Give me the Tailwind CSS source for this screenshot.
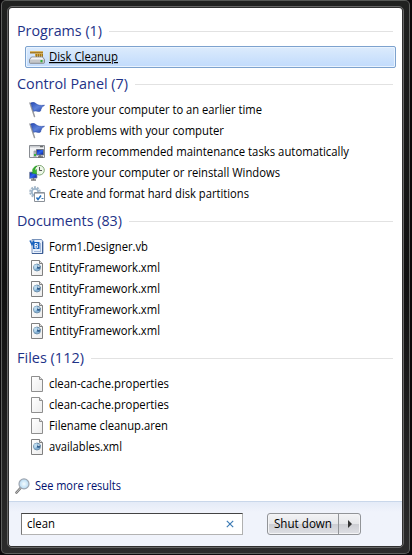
<!DOCTYPE html>
<html lang="en">
<head>
<meta charset="utf-8">
<title>Start menu search</title>
<script src="https://cdn.jsdelivr.net/npm/@tailwindcss/browser@4"></script>
</head>
<body class="w-[412px] h-[555px] overflow-hidden bg-[#0b090b] font-['Open_Sans','Noto_Sans',sans-serif] text-[12px] text-black">
<svg class="absolute size-0">
  <defs>
    <linearGradient id="flagFill" x2="1" y2="1"><stop stop-color="#2548b4"/><stop offset=".5" stop-color="#5f83da"/><stop offset="1" stop-color="#2444ad"/></linearGradient>
    <linearGradient id="paper" x2="1" y2="1"><stop stop-color="#fff"/><stop offset="1" stop-color="#ececec"/></linearGradient>
    <linearGradient id="screen" x2="1" y2="1"><stop stop-color="#0919a5"/><stop offset=".5" stop-color="#2d65ef"/><stop offset="1" stop-color="#07188d"/></linearGradient>
    <radialGradient id="lens"><stop stop-color="#f4fcff"/><stop offset="1" stop-color="#b5d9f2"/></radialGradient>
  </defs>
  <symbol id="flag" viewBox="0 0 16 16"><path d="M1 1 5.500 14.500" stroke="#9a9b9f" stroke-width="1.500" stroke-linecap="round"/><path d="M1.800 1C4 -.3 5.500.5 7.500 2S11 3.500 15.500 3.300C13 4.500 12 6.500 11.500 9 9 10.500 7.500 8 4.500 9.300Z" fill="url(#flagFill)" stroke="#2949a8" stroke-width=".6"/></symbol>
  <symbol id="page" viewBox="0 0 16 16"><path d="M2.500.5h8l3 3v12h-11z" fill="url(#paper)" stroke="#8e8e8e"/><path d="M10.500.5v3h3" fill="#ddd" stroke="#8e8e8e"/></symbol>
  <symbol id="xml" viewBox="0 0 16 16"><path d="M2.500.5h8l3 3v12h-11z" fill="url(#paper)" stroke="#808080"/><path d="M10.500.5v3h3" fill="#ddd" stroke="#808080"/><circle cx="8" cy="7.500" r="3.500" fill="#86b2d6" stroke="#66869f" stroke-width=".8"/><path d="M5 5.500 7.500 4l1 3-3 2.500z" fill="#bcdcf0"/><path d="M8 6h3.500L10.500 9 8 8.500z" fill="#315f8d"/><path d="M8.500 6.200h2.200" stroke="#fff"/></symbol>
  <symbol id="vb" viewBox="0 0 16 16"><path d="M3 .5h9.500l1.500 2v12H3z" fill="#e6effb" stroke="#7893bb"/><path d="M13.500 2.500v12M3 14.500h11" stroke="#3e5f96"/><path d="M5 12.500h7M11.500 4v8" stroke="#a3b9db"/><path d="M4 3h6.500v7H4z" fill="#1761bd"/><path d="m1 1.500 2 4 2-4" fill="none" stroke="#1761bd" stroke-width="1.500"/><path d="M6 4.500v4.500h1.500a1.100 1.100 0 0 0 0-2.300H6h1.500a1 1 0 0 0 0-2.200z" fill="none" stroke="#fff"/></symbol>
  <symbol id="disk" viewBox="0 0 16 16"><path d="M1 2.500h13v2H1z" fill="#a77b25"/><path d="M1 2.500h13" stroke="#dab768"/><path d="M6 4.500h8v3H6z" fill="#d5a73e"/><path d="M7.500 5v3M9.500 5v3M11.500 5v3M13.500 5v3" stroke="#8f681c" stroke-width=".8"/><path d="M2.500 8h11l2 2.500v3q0 .8-.8.8H1.300q-.8 0-.8-.8v-3z" fill="#c5c7ca" stroke="#77797c" stroke-width=".8"/><path d="M2.800 8.400h10.400l1.600 2H1.200z" fill="#f5f5f5"/><path d="M11.500 11h2v2.300h-2z" fill="#30ac38"/></symbol>
  <symbol id="maint" viewBox="0 0 16 16"><path d="M.5 1.500h15v12H.5z" fill="#f3f4f6" stroke="#888c92"/><path d="M1 2h14v1.500H1z" fill="#c9ccd0"/><path d="M11 2.700h3" stroke="#555"/><path d="M5 7h2v6.500H5z" fill="#bfc4ca" stroke="#7c8287" stroke-width=".6"/><path d="M5 10h2v2H5z" fill="#35b544"/><path d="M7.500 5.500h7v5.500h-7z" fill="url(#screen)" stroke="#6e7580"/><path d="M9 13h5M11 11v2" stroke="#666" stroke-width="1.300"/></symbol>
  <symbol id="recover" viewBox="0 0 16 16"><path d="m.5 7.200 7.500-.7v6.500l-7.500.5z" fill="url(#screen)" stroke="#8790a0" stroke-width=".7"/><path d="M2 15h5M4.500 13v2" stroke="#777" stroke-width="1.400"/><circle cx="10.500" cy="5.200" r="4.800" fill="#edf7e8" stroke="#83a876"/><path d="M10.500 2v3.500H13" stroke="#555" fill="none"/><path d="M7 1C3.500 3 3 5.500 4.200 7L2.500 8l5 1V4.500L6.200 5.700C5.500 4 6 2.500 8 1z" fill="#37b52e" stroke="#218c20" stroke-width=".5"/></symbol>
  <symbol id="gear" viewBox="0 0 16 16"><circle cx="6" cy="6" r="4.800" fill="none" stroke="#a3b6c7" stroke-width="2" stroke-dasharray="2 1"/><circle cx="6" cy="6" r="3.200" fill="#fff" stroke="#9db5ca" stroke-width="1.800"/><path d="M5.500 6.500h10v9h-10z" fill="#fff" stroke="#8a9199"/><path d="M6 7.500h9" stroke="#b9bec5"/><path d="m7.500 11.500 1.500 2 3-4" fill="none" stroke="#246fbd" stroke-width="1.500"/><path d="M12.500 12.500h2" stroke="#447caf"/></symbol>
  <symbol id="mag" viewBox="0 0 16 16"><path d="M6 9.500 1.500 14.500" stroke="#777" stroke-width="2.600" stroke-linecap="round"/><path d="M6 9.500 1.500 14.500" stroke="#c7c7c7" stroke-width="1" stroke-linecap="round"/><circle cx="9" cy="5.900" r="5" fill="url(#lens)" stroke="#9da5b0" stroke-width="1.200"/></symbol>
</svg>
<div class="ml-px w-[409px] h-[554px] rounded-[5px] border border-[#5d5f5d] border-t-[#555755] bg-linear-to-b from-[#202120] via-[#101010] to-[#2b2b2b] pt-[5px] pl-[5px]">
 <div class="w-[397px] h-[542px] rounded-[5px] border border-[#666] bg-[#303030] p-px">
  <div class="w-[393px] h-[538px] rounded-[3px] bg-white overflow-hidden flex flex-col">
   <main class="h-[493px] pl-2 pt-[13px] shrink-0">
    <h2 class="flex items-center h-5 w-[376px] gap-[7px] text-[15px] text-[#1e3287]"><svg class="w-[85px] h-5 shrink-0 fill-current overflow-visible"><text y="15" textLength="85" lengthAdjust="spacingAndGlyphs">Programs (1)</text></svg><i class="h-px grow bg-[#e2e2e2]"></i></h2>
    <div class="mt-[5px] ml-2 w-[371px] h-[22px] rounded-[2px] border border-[#7da2ce] bg-linear-to-b from-[#dcebfc] to-[#c1dbfc] shadow-[inset_0_0_0_1px_#e9f3fe] flex items-center gap-1 pl-[3px]"><svg class="size-4"><use href="#disk"/></svg><svg class="w-[69px] h-4 overflow-visible"><text class="underline" y="12" textLength="69" lengthAdjust="spacingAndGlyphs">Disk Cleanup</text></svg></div>
    <h2 class="mt-[6px] flex items-center h-5 w-[376px] gap-[7px] text-[15px] text-[#1e3287]"><svg class="w-[111px] h-5 shrink-0 fill-current overflow-visible"><text y="15" textLength="111" lengthAdjust="spacingAndGlyphs">Control Panel (7)</text></svg><i class="h-px grow bg-[#e2e2e2]"></i></h2>
    <ul class="mt-[5px] ml-3">
     <li class="h-[21px] flex items-center gap-1"><svg class="size-4"><use href="#flag"/></svg><svg class="w-[213px] h-4 overflow-visible"><text y="11.8" textLength="213" lengthAdjust="spacingAndGlyphs">Restore your computer to an earlier time</text></svg></li>
     <li class="h-[21px] flex items-center gap-1"><svg class="size-4"><use href="#flag"/></svg><svg class="w-[175px] h-4 overflow-visible"><text y="11.8" textLength="175" lengthAdjust="spacingAndGlyphs">Fix problems with your computer</text></svg></li>
     <li class="h-[21px] flex items-center gap-1"><svg class="size-4"><use href="#maint"/></svg><svg class="w-[300px] h-4 overflow-visible"><text y="11.8" textLength="300" lengthAdjust="spacingAndGlyphs">Perform recommended maintenance tasks automatically</text></svg></li>
     <li class="h-[21px] flex items-center gap-1"><svg class="size-4"><use href="#recover"/></svg><svg class="w-[231px] h-4 overflow-visible"><text y="11.8" textLength="231" lengthAdjust="spacingAndGlyphs">Restore your computer or reinstall Windows</text></svg></li>
     <li class="h-[21px] flex items-center gap-1"><svg class="size-4"><use href="#gear"/></svg><svg class="w-[200px] h-4 overflow-visible"><text y="11.8" textLength="200" lengthAdjust="spacingAndGlyphs">Create and format hard disk partitions</text></svg></li>
    </ul>
    <h2 class="mt-[7px] flex items-center h-5 w-[376px] gap-[7px] text-[15px] text-[#1e3287]"><svg class="w-[105px] h-5 shrink-0 fill-current overflow-visible"><text y="15" textLength="105" lengthAdjust="spacingAndGlyphs">Documents (83)</text></svg><i class="h-px grow bg-[#e2e2e2]"></i></h2>
    <ul class="mt-[5px] ml-3">
     <li class="h-[21px] flex items-center gap-1"><svg class="size-4"><use href="#vb"/></svg><svg class="w-[99px] h-4 overflow-visible"><text y="11.8" textLength="99" lengthAdjust="spacingAndGlyphs">Form1.Designer.vb</text></svg></li>
     <li class="h-[21px] flex items-center gap-1"><svg class="size-4"><use href="#xml"/></svg><svg class="w-[111px] h-4 overflow-visible"><text y="11.8" textLength="111" lengthAdjust="spacingAndGlyphs">EntityFramework.xml</text></svg></li>
     <li class="h-[21px] flex items-center gap-1"><svg class="size-4"><use href="#xml"/></svg><svg class="w-[111px] h-4 overflow-visible"><text y="11.8" textLength="111" lengthAdjust="spacingAndGlyphs">EntityFramework.xml</text></svg></li>
     <li class="h-[21px] flex items-center gap-1"><svg class="size-4"><use href="#xml"/></svg><svg class="w-[111px] h-4 overflow-visible"><text y="11.8" textLength="111" lengthAdjust="spacingAndGlyphs">EntityFramework.xml</text></svg></li>
     <li class="h-[21px] flex items-center gap-1"><svg class="size-4"><use href="#xml"/></svg><svg class="w-[111px] h-4 overflow-visible"><text y="11.8" textLength="111" lengthAdjust="spacingAndGlyphs">EntityFramework.xml</text></svg></li>
    </ul>
    <h2 class="mt-[7px] flex items-center h-5 w-[376px] gap-[7px] text-[15px] text-[#1e3287]"><svg class="w-[67px] h-5 shrink-0 fill-current overflow-visible"><text y="15" textLength="67" lengthAdjust="spacingAndGlyphs">Files (112)</text></svg><i class="h-px grow bg-[#e2e2e2]"></i></h2>
    <ul class="mt-[5px] ml-3">
     <li class="h-[21px] flex items-center gap-1"><svg class="size-4"><use href="#page"/></svg><svg class="w-[120px] h-4 overflow-visible"><text y="11.8" textLength="120" lengthAdjust="spacingAndGlyphs">clean-cache.properties</text></svg></li>
     <li class="h-[21px] flex items-center gap-1"><svg class="size-4"><use href="#page"/></svg><svg class="w-[120px] h-4 overflow-visible"><text y="11.8" textLength="120" lengthAdjust="spacingAndGlyphs">clean-cache.properties</text></svg></li>
     <li class="h-[21px] flex items-center gap-1"><svg class="size-4"><use href="#page"/></svg><svg class="w-[119px] h-4 overflow-visible"><text y="11.8" textLength="119" lengthAdjust="spacingAndGlyphs">Filename cleanup.aren</text></svg></li>
     <li class="h-[21px] flex items-center gap-1"><svg class="size-4"><use href="#xml"/></svg><svg class="w-[73px] h-4 overflow-visible"><text y="11.8" textLength="73" lengthAdjust="spacingAndGlyphs">availables.xml</text></svg></li>
    </ul>
    <div class="mt-[19px] -ml-[2px] h-5 flex items-center gap-1 text-[#00106e]"><svg class="size-4"><use href="#mag"/></svg><svg class="w-[86px] h-4 fill-current overflow-visible"><text y="12" textLength="86" lengthAdjust="spacingAndGlyphs">See more results</text></svg></div>
   </main>
   <footer class="h-[45px] shrink-0 border-t border-[#c9d7ea] bg-linear-to-b from-[#e4ebf7] to-[#f0f3fb] to-[10px] flex items-start pl-3 pt-[11px]">
    <div class="w-[222px] h-[22px] bg-white border border-[#777] border-t-[#444] border-b-[#b3b3b3] border-r-[#b0b0b0] flex items-center justify-between pl-[5px] pr-2"><svg class="w-[28px] h-4 overflow-visible"><text y="12" textLength="28" lengthAdjust="spacingAndGlyphs">clean</text></svg><svg class="size-2" viewBox="0 0 8 8"><path d="m.8.8 6.400 6.400m0-6.400L.8 7.200" stroke="#3e7cb5" stroke-width="1.200"/></svg></div>
    <div class="ml-6 h-[22px] w-[94px] rounded-[3px] border border-[#929498] flex overflow-hidden bg-[linear-gradient(#f3f3f5,#e6e7ea_48%,#cdced3_52%,#dfe0e5)] shadow-[inset_0_0_0_1px_#f4f4f6]">
     <button class="w-[71px] border-r border-[#929498] flex items-center justify-center"><svg class="w-[58px] h-4 overflow-visible"><text y="12" textLength="58" lengthAdjust="spacingAndGlyphs">Shut down</text></svg></button>
     <button class="grow flex items-center justify-center"><svg class="w-1 h-2" viewBox="0 0 4 8"><path d="M0 0v8l4-4z" fill="#333"/></svg></button>
    </div>
   </footer>
  </div>
 </div>
</div>
</body>
</html>
